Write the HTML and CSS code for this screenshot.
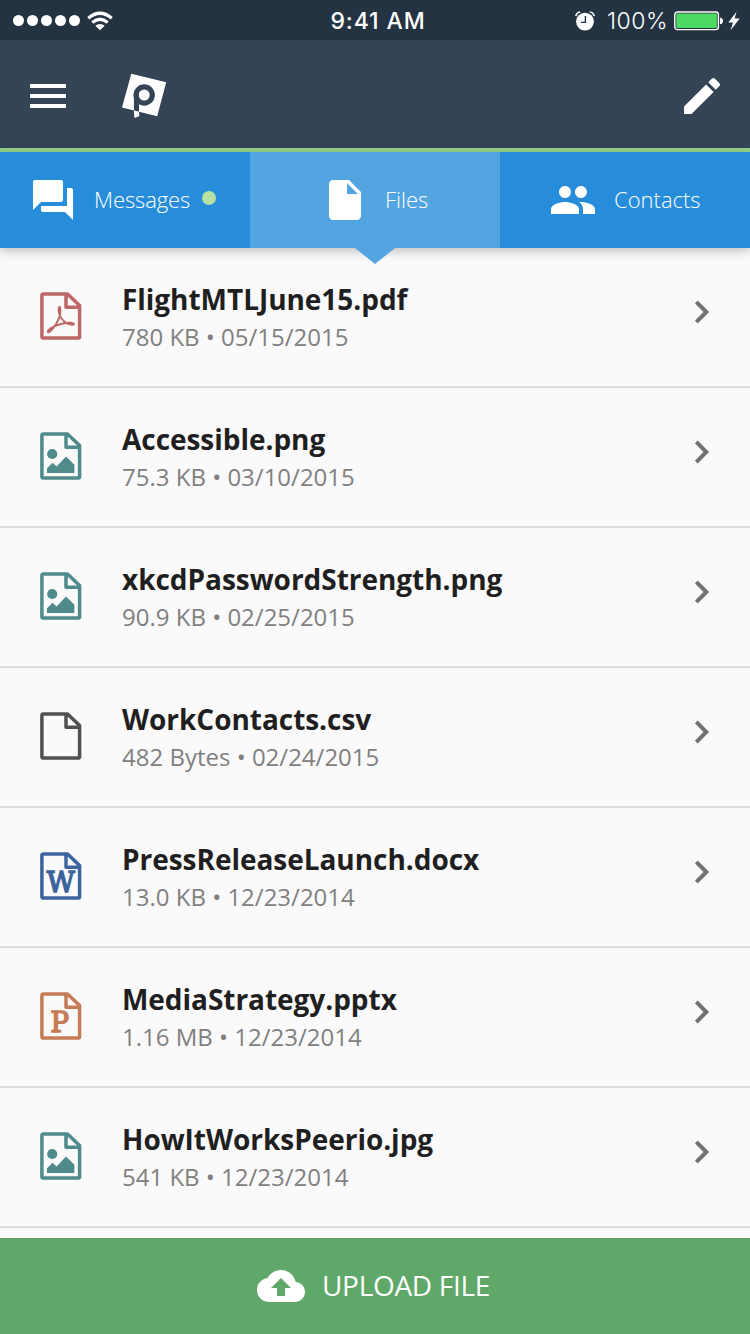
FILE: index.html
```html
<!DOCTYPE html>
<html lang="en">
<head>
<meta charset="utf-8">
<title>Files</title>
<link rel="stylesheet" href="styles.css">
</head>
<body>
<svg class="defs" width="0" height="0">
  <symbol id="page" viewBox="0 0 42 48">
    <path d="M3.6 1.9H27.5L39.6 13.6V44.4Q39.6 46.1 37.9 46.1H3.6Q1.9 46.1 1.9 44.4V3.6Q1.9 1.9 3.6 1.9ZM26 2V15.2H39.5" fill="none" stroke="currentColor" stroke-width="3.5" stroke-linejoin="round"/>
  </symbol>
  <symbol id="image" viewBox="0 0 42 48">
    <use href="#page" width="42" height="48"/>
    <circle cx="12.2" cy="22" r="5.1" fill="currentColor"/>
    <path d="M7 41V36.2L12.6 30.8L16.6 34.6L26 24.4L34.4 32.8V41Z" fill="currentColor"/>
  </symbol>
  <symbol id="chevron" viewBox="0 0 16 24">
    <path d="M2.3 1.8L12.3 12L2.3 22.2" fill="none" stroke="currentColor" stroke-width="4"/>
  </symbol>
</svg>
<div class="app">
  <header class="status">
    <div class="signal"><i></i><i></i><i></i><i></i><i></i>
      <svg class="wifi" width="26" height="20" viewBox="0 0 26 20"><g fill="none" stroke="#fff" stroke-width="3.2"><path d="M1.3 7.2Q13 -2.7 24.7 7.2"/><path d="M5.3 11.5Q13 5 20.7 11.5"/></g><path d="M8.3 14.8Q13 11 17.7 14.8L13 19.2Z" fill="#fff"/></svg>
    </div>
    <div class="clock">9:41 AM</div>
    <div class="power">
      <svg class="alarm" width="20" height="20" viewBox="0 0 20 20"><circle cx="10" cy="10.6" r="8.9" fill="#fff"/><path d="M.8 5.2Q1.5 1.4 5.2 1M19.2 5.2Q18.5 1.4 14.8 1" stroke="#fff" stroke-width="1.6" fill="none"/><path d="M10.4 5V11.4H5.8" fill="none" stroke="#243342" stroke-width="1.4"/></svg>
      <span class="percent">100%</span>
      <svg class="battery" width="50" height="20" viewBox="0 0 50 20"><rect x=".8" y="1" width="43.6" height="17.6" rx="2.6" fill="none" stroke="#fff" stroke-width="1.4"/><rect x="2.3" y="2.5" width="40.6" height="14.6" rx="1" fill="#4cd964"/><path d="M46 6.5Q49 7 49 10T46 13.2Z" fill="#fff"/></svg>
      <svg class="bolt" width="12" height="20" viewBox="0 0 12 20"><path d="M8.5 .7L.3 11.5H5L2.6 19.3L11.7 7.6H6.6Z" fill="#fff"/></svg>
    </div>
  </header>
  <div class="toolbar">
    <svg class="icon" viewBox="0 0 24 24"><path d="M3 18h18v-2H3zm0-5h18v-2H3zm0-7v2h18V6z"/></svg>
    <svg class="logo" width="46" height="46" viewBox="0 0 46 46">
      <path d="M10.3 1.8L45.2 10.3L36.2 44.2L1 35.6Z" fill="#fff"/>
      <circle cx="23.2" cy="23" r="8.1" fill="none" stroke="#344454" stroke-width="5.2"/>
      <path d="M12.9 22.5H18V39.8L12.9 38.6Z" fill="#344454"/>
      <path d="M12.9 38.4L18.2 39.7V44.3L13.4 46Z" fill="#fff"/>
    </svg>
    <svg class="icon edit" viewBox="0 0 24 24"><path d="M3 17.25V21h3.75L17.81 9.94l-3.75-3.75L3 17.25zM20.71 7.04c.39-.39.39-1.02 0-1.41l-2.34-2.34c-.39-.39-1.02-.39-1.41 0l-1.83 1.83 3.75 3.75 1.83-1.83z"/></svg>
  </div>
  <nav class="tabs">
    <div class="tab messages"><svg class="icon" viewBox="0 0 24 24"><path d="M21 6h-2v9H6v2c0 .55.45 1 1 1h11l4 4V7c0-.55-.45-1-1-1zm-4 6V3c0-.55-.45-1-1-1H3c-.55 0-1 .45-1 1v14l4-4h10c.55 0 1-.45 1-1z"/></svg><span>Messages</span><i class="unread"></i></div>
    <div class="tab files"><svg class="icon" viewBox="0 0 24 24"><path d="M6 2c-1.1 0-1.99.9-1.99 2L4 20c0 1.1.89 2 1.99 2H18c1.1 0 2-.9 2-2V8l-6-6H6zm7 7V3.5L18.5 9H13z"/></svg><span>Files</span></div>
    <div class="tab contacts"><svg class="icon" viewBox="0 0 24 24"><path d="M16 11c1.66 0 2.99-1.34 2.99-3S17.66 5 16 5s-3 1.34-3 3 1.34 3 3 3zm-8 0c1.66 0 2.99-1.34 2.99-3S9.66 5 8 5 5 6.34 5 8s1.34 3 3 3zm0 2c-2.33 0-7 1.17-7 3.5V19h14v-2.5c0-2.33-4.67-3.5-7-3.5zm8 0c-.29 0-.62.02-.97.05 1.16.84 1.97 1.97 1.97 3.45V19h6v-2.5c0-2.33-4.67-3.5-7-3.5z"/></svg><span>Contacts</span></div>
  </nav>
  <main class="list">
    <div class="row"><svg class="type pdf" viewBox="0 0 42 48"><use href="#page" width="42" height="48"/><path d="M19.4 14.7C17.8 16 18.8 21.5 20.2 24.4C22.3 28.8 27.5 32.8 32.3 32.9C35.6 32.5 33.5 30.5 29 30.8C22.5 31.2 15.5 33.4 10.6 36.4C6.7 39 7.3 41.5 10 39.5C14.2 35.7 19.4 27.5 20.1 22.5C20.6 18.5 20.5 15 19.4 14.7Z" fill="none" stroke="currentColor" stroke-width="1.9"/></svg><div class="info"><div class="name">FlightMTLJune15.pdf</div><div class="meta">780 KB • 05/15/2015</div></div><svg class="chevron"><use href="#chevron"/></svg></div>
    <div class="row"><svg class="type img"><use href="#image"/></svg><div class="info"><div class="name">Accessible.png</div><div class="meta">75.3 KB • 03/10/2015</div></div><svg class="chevron"><use href="#chevron"/></svg></div>
    <div class="row"><svg class="type img"><use href="#image"/></svg><div class="info"><div class="name">xkcdPasswordStrength.png</div><div class="meta">90.9 KB • 02/25/2015</div></div><svg class="chevron"><use href="#chevron"/></svg></div>
    <div class="row"><svg class="type plain"><use href="#page"/></svg><div class="info"><div class="name">WorkContacts.csv</div><div class="meta">482 Bytes • 02/24/2015</div></div><svg class="chevron"><use href="#chevron"/></svg></div>
    <div class="row"><svg class="type doc" viewBox="0 0 42 48"><use href="#page" width="42" height="48"/><text x="6.8" y="40.3" textLength="28" lengthAdjust="spacingAndGlyphs">W</text></svg><div class="info"><div class="name">PressReleaseLaunch.docx</div><div class="meta">13.0 KB • 12/23/2014</div></div><svg class="chevron"><use href="#chevron"/></svg></div>
    <div class="row"><svg class="type ppt" viewBox="0 0 42 48"><use href="#page" width="42" height="48"/><text x="10.4" y="40.3" textLength="18.5" lengthAdjust="spacingAndGlyphs">P</text></svg><div class="info"><div class="name">MediaStrategy.pptx</div><div class="meta">1.16 MB • 12/23/2014</div></div><svg class="chevron"><use href="#chevron"/></svg></div>
    <div class="row"><svg class="type img"><use href="#image"/></svg><div class="info"><div class="name">HowItWorksPeerio.jpg</div><div class="meta">541 KB • 12/23/2014</div></div><svg class="chevron"><use href="#chevron"/></svg></div>
  </main>
  <footer class="upload"><svg class="icon" viewBox="0 0 24 24"><path d="M19.35 10.04C18.67 6.59 15.64 4 12 4 9.11 4 6.6 5.64 5.35 8.04 2.34 8.36 0 10.91 0 14c0 3.31 2.69 6 6 6h13c2.76 0 5-2.24 5-5 0-2.64-2.05-4.78-4.65-4.96zM14 13v4h-4v-4H7l5-5 5 5h-3z"/></svg><span>UPLOAD FILE</span></footer>
</div>
</body>
</html>
```
FILE: styles.css
```css
* { box-sizing: border-box; }
body { margin: 0; background: #fafafa; font-family: "Open Sans", sans-serif; }
svg { display: block; flex: none; }
.defs { position: absolute; }
.app { width: 750px; height: 1334px; display: flex; flex-direction: column; overflow: hidden; }
.icon { width: 48px; height: 48px; fill: #fff; }

.status { height: 40px; flex: none; background: #243342; color: #fff; display: grid; grid-template-columns: 1fr auto 1fr; align-items: center; font-family: Inter, sans-serif; font-size: 23px; line-height: 40px; }
.signal { display: flex; align-items: center; gap: 3px; padding-left: 13px; }
.signal i { width: 11px; height: 11px; border-radius: 50%; background: #fff; }
.wifi { margin-left: 4px; }
.clock { font-weight: 500; padding: 1px 0 0 6px; letter-spacing: .9px; }
.power { display: flex; align-items: center; justify-content: flex-end; padding-right: 10px; }
.percent { margin: 0 6px 0 12px; padding-top: 1px; letter-spacing: .5px; font-weight: 300; }
.bolt { margin-left: 4px; }

.toolbar { height: 112px; flex: none; background: #344454; border-bottom: 4px solid #93d28a; display: flex; align-items: center; padding: 4px 24px 0; }
.logo { margin: -2px 0 0 49px; }
.edit { margin-left: auto; }

.tabs { height: 96px; flex: none; display: grid; grid-template-columns: repeat(3, 1fr); background: #278ddb; color: #fff; font-size: 22px; font-weight: 300; box-shadow: 0 3px 10px rgba(0,0,0,.24); position: relative; z-index: 1; }
.tab { display: flex; align-items: center; position: relative; }
.tab span { padding-bottom: 2px; }
.messages { padding-left: 29px; }
.messages span { margin-left: 17px; letter-spacing: -.1px; }
.unread { width: 14px; height: 14px; border-radius: 50%; background: #b7e2a4; margin: -4px 0 0 12px; }
.files { padding-left: 71px; background: #52a5e1; }
.files span { margin-left: 16px; }
.files::after { content: ""; position: absolute; left: 105px; top: 96px; border: 20px solid transparent; border-top: 16px solid #52a5e1; border-bottom: 0; }
.contacts { padding-left: 49px; }
.contacts span { margin-left: 17px; }

.list { flex: 1; background: #fafafa; }
.row { height: 140px; border-bottom: 2px solid #dcdcdc; display: flex; align-items: flex-start; padding: 0 40px; }
.type { width: 42px; height: 48px; margin-top: 44px; }
.type text { font: 27px "DejaVu Serif", serif; fill: currentColor; stroke: currentColor; stroke-width: 1.5; }
.pdf { color: #be6767; }
.img { color: #508b8b; }
.plain { color: #515151; }
.doc { color: #3c659d; }
.ppt { color: #c57b55; }
.info { margin: 31px 0 0 40px; flex: 1; }
.name { font-size: 28px; font-weight: 700; line-height: 40px; letter-spacing: -.04px; color: #1f1f1f; white-space: nowrap; }
.meta { font-size: 24px; line-height: 36px; color: #808080; white-space: nowrap; }
.chevron { width: 16px; height: 24px; margin: 52px 0 0; color: #727272; }

.upload { height: 96px; flex: none; background: #60a869; color: #fff; display: flex; align-items: center; padding-left: 257px; gap: 17px; font-size: 28px; font-weight: 400; letter-spacing: -.3px; }
.upload span { padding-bottom: 2px; }
```
